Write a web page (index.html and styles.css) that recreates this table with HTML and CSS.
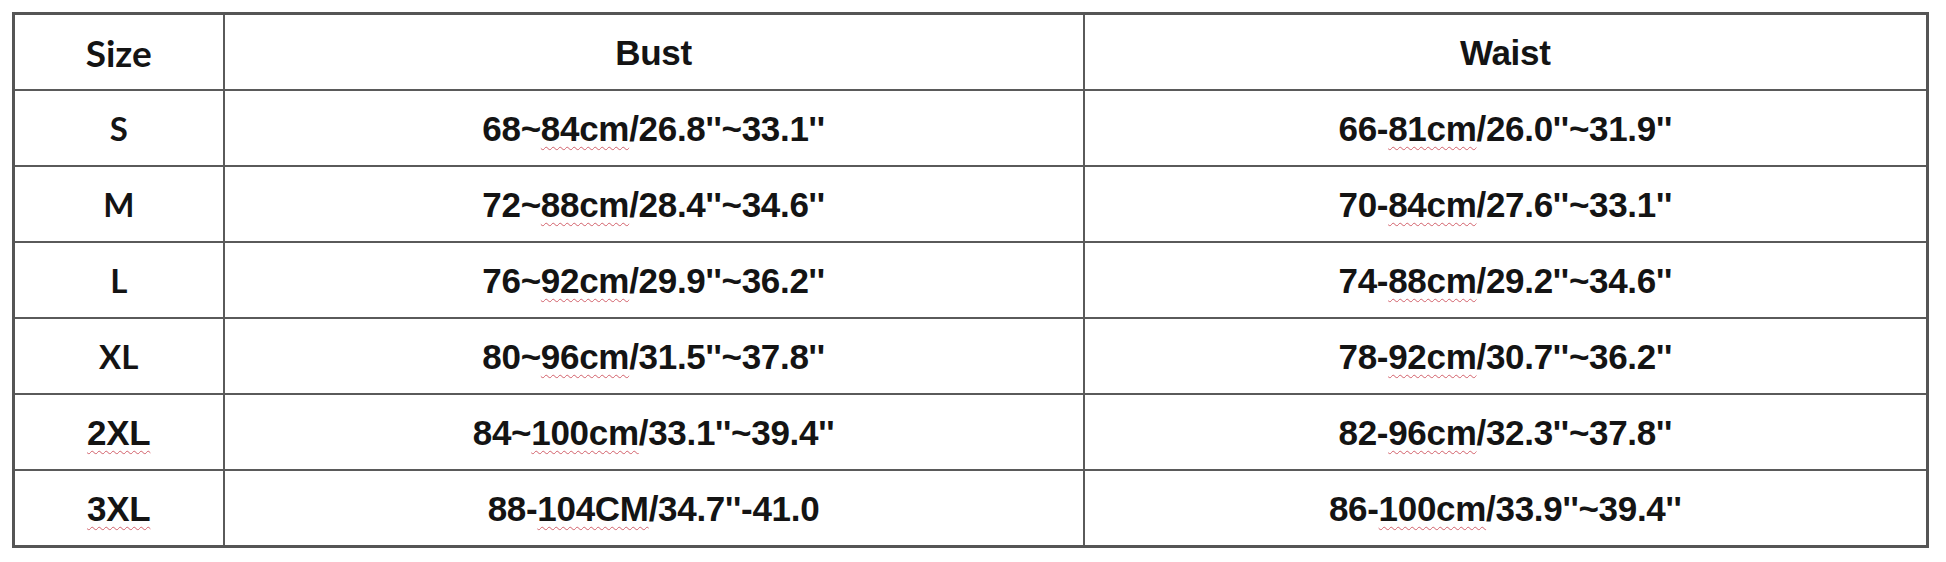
FILE: index.html
```html
<!DOCTYPE html>
<html>
<head>
<meta charset="utf-8">
<link rel="stylesheet" href="styles.css">
</head>
<body>
<table class="chart">
  <colgroup>
    <col class="c-size">
    <col class="c-bust">
    <col class="c-waist">
  </colgroup>
  <tr>
    <th class="cal">Size</th>
    <th>Bust</th>
    <th>Waist</th>
  </tr>
  <tr>
    <td class="cal sm">S</td>
    <td>68~<span class="sp">84cm</span>/26.8''~33.1''</td>
    <td>66-<span class="sp">81cm</span>/26.0''~31.9''</td>
  </tr>
  <tr>
    <td class="cal sm">M</td>
    <td>72~<span class="sp">88cm</span>/28.4''~34.6''</td>
    <td>70-<span class="sp">84cm</span>/27.6''~33.1''</td>
  </tr>
  <tr>
    <td class="cal sm">L</td>
    <td>76~<span class="sp">92cm</span>/29.9''~36.2''</td>
    <td>74-<span class="sp">88cm</span>/29.2''~34.6''</td>
  </tr>
  <tr>
    <td class="cal sm">XL</td>
    <td>80~<span class="sp">96cm</span>/31.5''~37.8''</td>
    <td>78-<span class="sp">92cm</span>/30.7''~36.2''</td>
  </tr>
  <tr>
    <td><span class="sp">2XL</span></td>
    <td>84~<span class="sp">100cm</span>/33.1''~39.4''</td>
    <td>82-<span class="sp">96cm</span>/32.3''~37.8''</td>
  </tr>
  <tr>
    <td><span class="sp">3XL</span></td>
    <td>88-<span class="sp">104CM</span>/34.7''-41.0</td>
    <td>86-<span class="sp">100cm</span>/33.9''~39.4''</td>
  </tr>
</table>
</body>
</html>
```

FILE: styles.css
```css
html, body {
  margin: 0;
  padding: 0;
  background: #ffffff;
}

body {
  padding: 12px 0 0 12px;
}

.chart {
  border-collapse: collapse;
  width: 1914px;
  table-layout: fixed;
  font-family: "Liberation Sans", Arial, sans-serif;
  font-weight: bold;
  font-size: 35px;
  color: #141414;
  border: 3px solid #555555;
}

.c-size { width: 210px; }
.c-bust { width: 860px; }
.c-waist { width: 844px; }

.chart th,
.chart td {
  border: 2px solid #5a5a5a;
  height: 74px;
  padding: 0;
  text-align: center;
  vertical-align: middle;
  font-weight: bold;
  line-height: 1;
  letter-spacing: -0.3px;
}

.chart .cal {
  font-family: Lato, "Open Sans", sans-serif;
  font-size: 37px;
  letter-spacing: 0;
}

.chart .cal.sm {
  font-size: 33px;
}

.sp {
  text-decoration: underline wavy #d2606a;
  text-decoration-thickness: 1px;
  text-underline-offset: 5px;
}
```
